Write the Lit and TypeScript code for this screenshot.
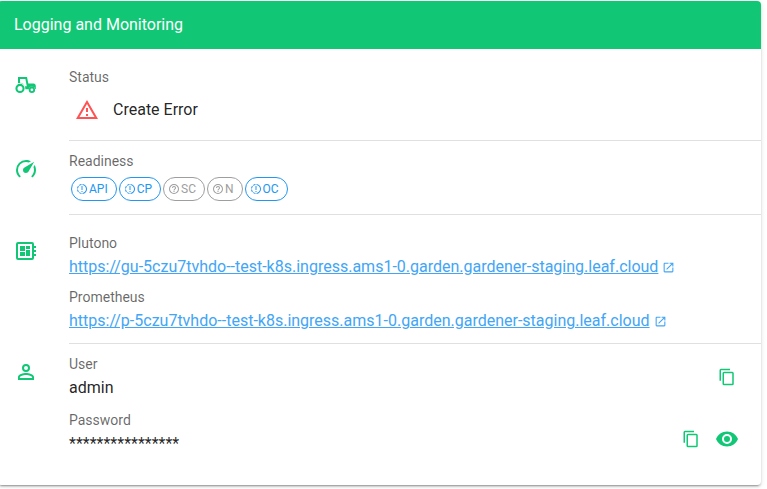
import { LitElement, html, css, svg } from "lit";
import { customElement, property, state } from "lit/decorators.js";

const ICONS: Record<string, string> = {
  tractor:
    "M4 10.2V4H13L14.3 10.6H19.6C20.9 10.6 21.8 11.6 21.8 12.9V16H21A3.3 3.3 0 0 0 14.6 16.2H11.4A5.4 5.4 0 0 0 4 10.2M6 10C8.3 10 10.2 11.3 11 13.2H12.8L11.4 6H6V10M6 10.8A4.6 4.6 0 1 1 6 20A4.6 4.6 0 1 1 6 10.8M6 12.9A2.5 2.5 0 1 0 6 17.9A2.5 2.5 0 1 0 6 12.9M17.9 13.6A3.2 3.2 0 1 1 17.9 20A3.2 3.2 0 1 1 17.9 13.6M17.9 15.4A1.4 1.4 0 1 0 17.9 18.2A1.4 1.4 0 1 0 17.9 15.4Z",
  speedometer:
    "M12,16A3,3 0 0,1 9,13C9,11.88 9.61,10.9 10.5,10.39L20.21,4.77L14.68,14.35C14.18,15.33 13.17,16 12,16M12,3C13.81,3 15.5,3.5 16.97,4.32L14.87,5.53C14,5.19 13,5 12,5A8,8 0 0,0 4,13C4,15.21 4.89,17.21 6.34,18.65H6.35C6.74,19.04 6.74,19.67 6.35,20.06C5.96,20.45 5.32,20.45 4.93,20.07V20.07C3.12,18.26 2,15.76 2,13A10,10 0 0,1 12,3M22,13C22,15.76 20.88,18.26 19.07,20.07V20.07C18.68,20.45 18.05,20.45 17.66,20.06C17.27,19.67 17.27,19.04 17.66,18.65V18.65C19.11,17.2 20,15.21 20,13C20,12 19.81,11 19.46,10.1L20.67,8C21.5,9.5 22,11.18 22,13Z",
  board:
    "M22,9V7H20V5A2,2 0 0,0 18,3H4A2,2 0 0,0 2,5V19A2,2 0 0,0 4,21H18A2,2 0 0,0 20,19V17H22V15H20V13H22V11H20V9H22M18,19H4V5H18V19M6,13H11V17H6V13M12,7H16V10H12V7M6,7H11V12H6V7M12,11H16V17H12V11Z",
  account:
    "M12,4A4,4 0 0,1 16,8A4,4 0 0,1 12,12A4,4 0 0,1 8,8A4,4 0 0,1 12,4M12,6A2,2 0 0,0 10,8A2,2 0 0,0 12,10A2,2 0 0,0 14,8A2,2 0 0,0 12,6M12,13C14.67,13 20,14.33 20,17V20H4V17C4,14.33 9.33,13 12,13M12,14.9C9.03,14.9 5.9,16.36 5.9,17V18.1H18.1V17C18.1,16.36 14.97,14.9 12,14.9Z",
  alert: "M12,2L1,21H23M12,6L19.53,19H4.47M11,10V14H13V10M11,16V18H13V16",
  copy: "M19,21H8V7H19M19,5H8A2,2 0 0,0 6,7V21A2,2 0 0,0 8,23H19A2,2 0 0,0 21,21V7A2,2 0 0,0 19,5M16,1H4A2,2 0 0,0 2,3V17H4V3H16V1Z",
  eye: "M12,9A3,3 0 0,0 9,12A3,3 0 0,0 12,15A3,3 0 0,0 15,12A3,3 0 0,0 12,9M12,17A5,5 0 0,1 7,12A5,5 0 0,1 12,7A5,5 0 0,1 17,12A5,5 0 0,1 12,17M12,4.5C7,4.5 2.73,7.61 1,12C2.73,16.39 7,19.5 12,19.5C17,19.5 21.27,16.39 23,12C21.27,7.61 17,4.5 12,4.5Z",
  open: "M14,3V5H17.59L7.76,14.83L9.17,16.24L19,6.41V10H21V3M19,19H5V5H12V3H5C3.89,3 3,3.9 3,5V19A2,2 0 0,0 5,21H19A2,2 0 0,0 21,19V12H19V19Z",
  unknown:
    "M11,18H13V16H11V18M12,2A10,10 0 0,0 2,12A10,10 0 0,0 12,22A10,10 0 0,0 22,12A10,10 0 0,0 12,2M12,20C7.59,20 4,16.41 4,12C4,7.59 7.59,4 12,4C16.41,4 20,7.59 20,12C20,16.41 16.41,20 12,20M12,6A4,4 0 0,0 8,10H10A2,2 0 0,1 12,8A2,2 0 0,1 14,10C14,12 11,11.75 11,15H13C13,12.75 16,12.5 16,10A4,4 0 0,0 12,6Z",
  progress:
    "M13 2.03V4.05C17.39 4.59 20.5 8.58 19.96 12.97C19.5 16.61 16.64 19.5 13 19.93V21.93C18.5 21.38 22.5 16.5 21.95 11C21.5 6.25 17.73 2.5 13 2.03M11 2.06C9.05 2.25 7.19 3 5.67 4.26L7.1 5.74C8.22 4.84 9.57 4.26 11 4.06V2.06M4.26 5.67C3 7.19 2.25 9.04 2.05 11H4.05C4.24 9.58 4.8 8.23 5.69 7.1L4.26 5.67M2.06 13C2.26 14.96 3.03 16.81 4.27 18.33L5.69 16.9C4.81 15.77 4.24 14.42 4.06 13H2.06M7.1 18.37L5.67 19.74C7.18 21 9.04 21.79 11 22V20C9.58 19.82 8.23 19.25 7.1 18.37M13 18V16H11V18H13M13 14V6H11V14H13Z",
};

@customElement("mdi-icon")
class MdiIcon extends LitElement {
  @property() name = "";

  static styles = css`
    :host {
      display: block;
      flex: none;
      width: 24px;
      height: 24px;
    }
    svg {
      display: block;
      width: 100%;
      height: 100%;
      fill: currentColor;
    }
  `;

  render() {
    return html`<svg viewBox="0 0 24 24" aria-hidden="true">
      ${svg`<path d=${ICONS[this.name] ?? ""} fill-rule=${this.name === "tractor" ? "evenodd" : "nonzero"}></path>`}
    </svg>`;
  }
}

interface Condition {
  label: string;
  known: boolean;
}

@customElement("app-root")
class AppRoot extends LitElement {
  @state() private revealed = false;

  private conditions: Condition[] = [
    { label: "API", known: true },
    { label: "CP", known: true },
    { label: "SC", known: false },
    { label: "N", known: false },
    { label: "OC", known: true },
  ];

  private links = [
    { label: "Plutono", url: "https://gu-5czu7tvhdo--test-k8s.ingress.ams1-0.garden.gardener-staging.leaf.cloud" },
    { label: "Prometheus", url: "https://p-5czu7tvhdo--test-k8s.ingress.ams1-0.garden.gardener-staging.leaf.cloud" },
  ];

  static styles = css`
    :host {
      display: block;
      font-family: Roboto, "Liberation Sans", sans-serif;
      font-size: 16px;
      line-height: 24px;
      color: rgba(0, 0, 0, 0.87);
      background: #fff;
      overflow: hidden;
      padding: 1px 6px 4px 0;
    }
    .card {
      margin-left: -2px;
      border-radius: 4px;
      background: #fff;
      box-shadow: 0 3px 1px -2px rgba(0, 0, 0, 0.2), 0 2px 2px 0 rgba(0, 0, 0, 0.14),
        0 1px 5px 0 rgba(0, 0, 0, 0.12);
      padding-bottom: 19px;
    }
    h2 {
      margin: 0;
      padding: 12px 16px;
      border-radius: 4px 4px 0 0;
      background: #11c776;
      color: #fff;
      font-size: 16px;
      font-weight: 400;
    }
    .section {
      display: grid;
      grid-template-columns: 55px minmax(0, 1fr);
      padding-left: 16px;
    }
    .lead {
      margin-top: 16px;
      color: #11c776;
    }
    .section.roomy .lead {
      margin-top: 24px;
    }
    .body {
      border-bottom: 1px solid #e0e0e0;
      padding: 10px 0;
    }
    .roomy .body {
      padding-top: 18px;
    }
    .status .body {
      padding-bottom: 18px;
    }
    .readiness .body {
      padding-bottom: 13px;
    }
    .section:last-child .body {
      border-bottom: 0;
    }
    .label {
      font-size: 14px;
      line-height: 20px;
      color: rgba(0, 0, 0, 0.6);
    }
    .state {
      display: flex;
      align-items: center;
      gap: 14px;
      margin-top: 11px;
      padding-left: 6px;
    }
    .state mdi-icon {
      color: #ff5252;
    }
    .chips {
      display: flex;
      flex-wrap: wrap;
      gap: 2px;
      margin: 6px 0 0;
      padding: 0 2px;
      list-style: none;
    }
    .chip {
      display: flex;
      align-items: center;
      gap: 1px;
      box-sizing: border-box;
      height: 24px;
      padding: 0 8px 0 4px;
      border: 1px solid #9e9e9e;
      border-radius: 12px;
      color: #9e9e9e;
      font-size: 12px;
    }
    .chip.known {
      border-color: #2196f3;
      color: #2196f3;
    }
    .chip mdi-icon {
      width: 12px;
      height: 12px;
    }
    .entry,
    .field {
      margin-top: 8px;
    }
    .entry:first-child,
    .field:first-child {
      margin-top: 0;
    }
    .link,
    .value {
      margin-top: 2px;
    }
    .link {
      display: flex;
      align-items: center;
      gap: 4px;
      color: #42a5f5;
    }
    a {
      color: inherit;
    }
    .link mdi-icon {
      width: 13px;
      height: 13px;
    }
    .field {
      display: flex;
      align-items: center;
      padding-right: 16px;
    }
    .field + .field {
      align-items: flex-end;
      margin-top: 10px;
    }
    .text {
      flex: 1;
      min-width: 0;
    }
    button {
      display: grid;
      place-items: center;
      width: 36px;
      height: 34px;
      padding: 0;
      border: 0;
      background: none;
      color: #11c776;
      cursor: pointer;
    }
    .copy mdi-icon {
      width: 18px;
      height: 18px;
    }
  `;

  private copy(text: string) {
    navigator.clipboard?.writeText(text);
  }

  render() {
    return html`
      <section class="card">
        <h2>Logging and Monitoring</h2>
        <div class="section roomy status">
          <mdi-icon class="lead" name="tractor"></mdi-icon>
          <div class="body">
            <div class="label">Status</div>
            <div class="state"><mdi-icon name="alert"></mdi-icon><span>Create Error</span></div>
          </div>
        </div>
        <div class="section readiness">
          <mdi-icon class="lead" name="speedometer"></mdi-icon>
          <div class="body">
            <div class="label">Readiness</div>
            <ul class="chips">
              ${this.conditions.map(
                (c) => html`<li class="chip ${c.known ? "known" : ""}">
                  <mdi-icon name=${c.known ? "progress" : "unknown"}></mdi-icon><span>${c.label}</span>
                </li>`
              )}
            </ul>
          </div>
        </div>
        <div class="section roomy">
          <mdi-icon class="lead" name="board"></mdi-icon>
          <div class="body">
            ${this.links.map(
              (l) => html`<div class="entry">
                <div class="label">${l.label}</div>
                <div class="link"><a href=${l.url}>${l.url}</a><mdi-icon name="open"></mdi-icon></div>
              </div>`
            )}
          </div>
        </div>
        <div class="section">
          <mdi-icon class="lead" name="account"></mdi-icon>
          <div class="body">
            <div class="field">
              <div class="text">
                <div class="label">User</div>
                <div class="value">admin</div>
              </div>
              <button class="copy" aria-label="Copy user" @click=${() => this.copy("admin")}>
                <mdi-icon name="copy"></mdi-icon>
              </button>
            </div>
            <div class="field">
              <div class="text">
                <div class="label">Password</div>
                <div class="value">****************</div>
              </div>
              <button class="copy" aria-label="Copy password">
                <mdi-icon name="copy"></mdi-icon>
              </button>
              <button
                aria-label="Show password"
                aria-pressed=${this.revealed}
                @click=${() => (this.revealed = !this.revealed)}
              >
                <mdi-icon name="eye"></mdi-icon>
              </button>
            </div>
          </div>
        </div>
      </section>
    `;
  }
}
